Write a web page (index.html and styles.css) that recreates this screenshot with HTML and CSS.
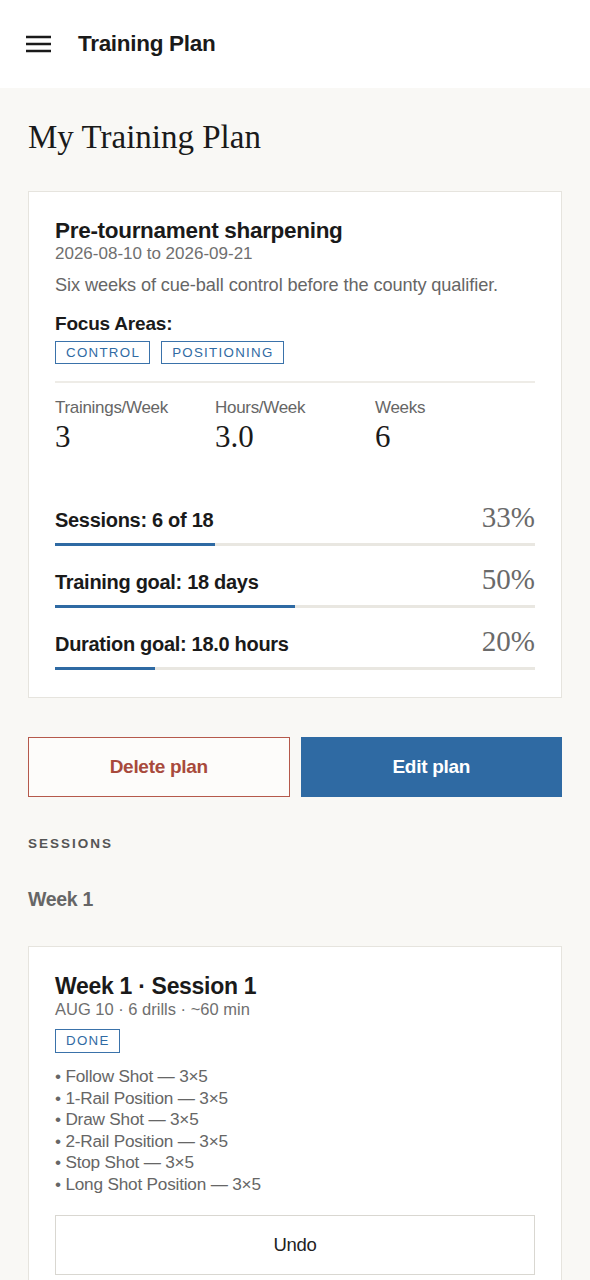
FILE: index.html
```html
<!DOCTYPE html>
<html>
<head>
<meta charset="utf-8">
<link rel="stylesheet" href="styles.css">
</head>
<body>
<header class="topbar">
  <svg class="menu" width="25" height="18" viewBox="0 0 25 18"><path d="M0 2h25M0 9h25M0 16h25" stroke="#1a1a1a" stroke-width="2.6"/></svg>
  <span class="topbar-title">Training Plan</span>
</header>
<main class="page">
  <h1 class="page-title">My Training Plan</h1>
  <section class="card plan">
    <h2 class="plan-title">Pre-tournament sharpening</h2>
    <div class="dates">2026-08-10 to 2026-09-21</div>
    <p class="desc">Six weeks of cue-ball control before the county qualifier.</p>
    <div class="focus-label">Focus Areas:</div>
    <div class="tags">
      <span class="tag">CONTROL</span>
      <span class="tag">POSITIONING</span>
    </div>
    <div class="stats">
      <div class="stat"><div class="stat-label">Trainings/Week</div><div class="stat-value">3</div></div>
      <div class="stat"><div class="stat-label">Hours/Week</div><div class="stat-value">3.0</div></div>
      <div class="stat"><div class="stat-label">Weeks</div><div class="stat-value">6</div></div>
    </div>
    <div class="progress first">
      <div class="progress-head"><span class="progress-label">Sessions: 6 of 18</span><span class="progress-pct">33%</span></div>
      <div class="track"><div class="fill" style="width:33.3%"></div></div>
    </div>
    <div class="progress">
      <div class="progress-head"><span class="progress-label">Training goal: 18 days</span><span class="progress-pct">50%</span></div>
      <div class="track"><div class="fill" style="width:50%"></div></div>
    </div>
    <div class="progress">
      <div class="progress-head"><span class="progress-label">Duration goal: 18.0 hours</span><span class="progress-pct">20%</span></div>
      <div class="track"><div class="fill" style="width:20.8%"></div></div>
    </div>
  </section>
  <div class="actions">
    <button class="btn btn-delete">Delete plan</button>
    <button class="btn btn-edit">Edit plan</button>
  </div>
  <div class="section-label">SESSIONS</div>
  <h3 class="week">Week 1</h3>
  <section class="card session">
    <h2 class="session-title">Week 1 · Session 1</h2>
    <div class="meta">AUG 10 · 6 drills · ~60 min</div>
    <div class="tag done">DONE</div>
    <ul class="drills">
      <li>• Follow Shot — 3×5</li>
      <li>• 1-Rail Position — 3×5</li>
      <li>• Draw Shot — 3×5</li>
      <li>• 2-Rail Position — 3×5</li>
      <li>• Stop Shot — 3×5</li>
      <li>• Long Shot Position — 3×5</li>
    </ul>
    <button class="btn btn-undo">Undo</button>
  </section>
</main>
</body>
</html>
```

FILE: styles.css
```css
* { box-sizing: border-box; }
html, body { margin: 0; padding: 0; }
body {
  font-family: "Liberation Sans", Arial, sans-serif;
  color: #1a1a1a;
  background: #f9f8f5;
}
.topbar {
  height: 88px;
  background: #fff;
  display: flex;
  align-items: center;
  padding: 0 26px;
  gap: 27px;
}
.menu { display: block; }
.topbar-title {
  font-size: 22.5px;
  font-weight: 700;
  letter-spacing: -0.3px;
}
.page { padding: 0 28px 40px; }
.page-title {
  font-family: "Liberation Serif", "DejaVu Serif", serif;
  font-weight: 400;
  font-size: 33px;
  margin: 0;
  padding-top: 29px;
  line-height: 40px;
}
.card {
  background: #fff;
  border: 1px solid #e6e4de;
  padding: 26px 26px 0;
}
.plan { margin-top: 34px; padding-bottom: 27px; }
.plan-title, .session-title {
  font-size: 22.5px;
  font-weight: 700;
  margin: 0;
  line-height: 26px;
  letter-spacing: -0.3px;
}
.session-title { font-size: 23px; }
.dates, .meta {
  font-size: 17px;
  color: #6f6f6f;
  line-height: 20px;
}
.meta { font-size: 16.5px; }
.desc {
  margin: 11px 0 0;
  font-size: 18.2px;
  color: #666;
  line-height: 20px;
  letter-spacing: -0.1px;
}
.focus-label {
  margin-top: 18px;
  font-size: 19px;
  font-weight: 700;
  line-height: 22px;
  letter-spacing: -0.2px;
}
.tags { display: flex; gap: 11px; margin-top: 6px; }
.tag {
  display: inline-block;
  border: 1.5px solid #3a72aa;
  color: #2f6aa3;
  font-size: 13.3px;
  letter-spacing: 1.3px;
  line-height: 21px;
  padding: 0 9px 0 10px;
}
.stats {
  display: grid;
  grid-template-columns: 1fr 1fr 1fr;
  border-top: 2px solid #eeece7;
  margin-top: 17px;
  padding-top: 15px;
}
.stat-label { font-size: 17px; color: #666; line-height: 20px; letter-spacing: -0.3px; }
.stat-value {
  font-family: "Liberation Serif", "DejaVu Serif", serif;
  font-size: 31px;
  line-height: 34px;
  margin-top: 2px;
}
.progress { margin-top: 21px; }
.progress.first { margin-top: 51px; }
.progress-head {
  display: flex;
  justify-content: space-between;
  align-items: baseline;
  height: 24px;
}
.progress-label { font-size: 20px; font-weight: 700; line-height: 24px; letter-spacing: -0.3px; }
.progress-pct {
  font-family: "Liberation Serif", "DejaVu Serif", serif;
  font-size: 29px;
  color: #6a6a6a;
  line-height: 24px;
}
.track {
  height: 3px;
  background: #e9e7e1;
  margin-top: 14px;
}
.fill { height: 3px; background: #2f6aa3; }
.actions {
  display: grid;
  grid-template-columns: 1fr 1fr;
  gap: 11px;
  margin-top: 39px;
}
.btn {
  font-family: "Liberation Sans", Arial, sans-serif;
  font-size: 19px;
  font-weight: 700;
  height: 60px;
  cursor: pointer;
  letter-spacing: -0.3px;
}
.btn-delete {
  background: #fdfcfa;
  border: 1.5px solid #b5594b;
  color: #a84a3c;
}
.btn-edit {
  background: #2f6aa3;
  border: 1px solid #2f6aa3;
  color: #fff;
}
.section-label {
  margin-top: 39px;
  font-size: 13.5px;
  font-weight: 700;
  letter-spacing: 2px;
  color: #555;
  line-height: 16px;
}
.week {
  margin: 36px 0 0;
  font-size: 19.5px;
  font-weight: 700;
  color: #666;
  line-height: 22px;
  letter-spacing: -0.3px;
}
.session { margin-top: 36px; padding-bottom: 10px; }
.done {
  display: block;
  width: fit-content;
  margin-top: 10px;
  line-height: 22px;
}
.drills {
  list-style: none;
  margin: 13px 0 0;
  padding: 0;
  font-size: 17.2px;
  color: #666;
  line-height: 21.6px;
  letter-spacing: -0.2px;
}
.btn-undo {
  display: block;
  width: 100%;
  margin-top: 19px;
  background: #fff;
  border: 1.5px solid #d9d7d1;
  color: #222;
  font-weight: 400;
  font-size: 18.5px;
  height: 60px;
}
```
